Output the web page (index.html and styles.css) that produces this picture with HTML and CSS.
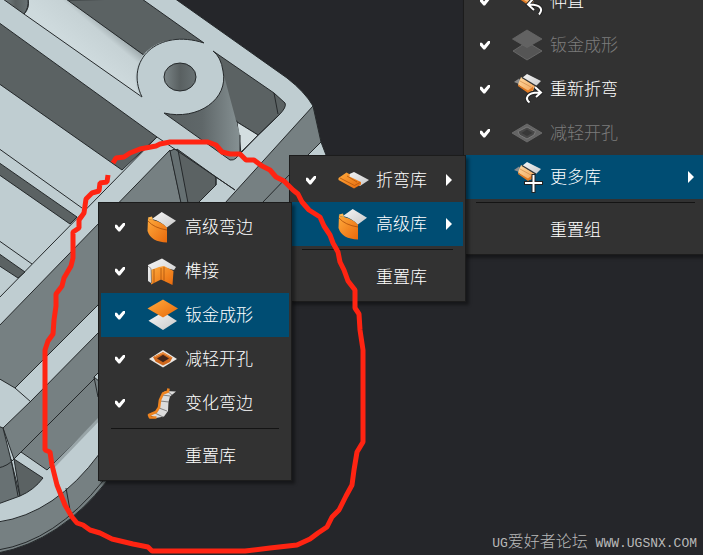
FILE: index.html
```
<!DOCTYPE html>
<html lang="zh-CN">
  <head>
    <meta charset="utf-8">
    <title>UG爱好者论坛</title>
    <link rel="stylesheet" href="styles.css">
  </head>
  <body>
    <svg width="0" height="0" class="defs" aria-hidden="true">
      <defs>
        <linearGradient id="orange" x1="0" y1="0" x2="1" y2="1">
          <stop offset="0" stop-color="#ffab3d"/>
          <stop offset="1" stop-color="#e8690c"/>
        </linearGradient>
        <linearGradient id="peach" x1="0" y1="0" x2="1" y2="1">
          <stop offset="0" stop-color="#ffd9a0"/>
          <stop offset="1" stop-color="#f2a45a"/>
        </linearGradient>
        <linearGradient id="silver" x1="0" y1="0" x2="1" y2="1">
          <stop offset="0" stop-color="#f6f6f6"/>
          <stop offset="1" stop-color="#c9c9c9"/>
        </linearGradient>
      </defs>
      <symbol id="bent-sheet" viewBox="0 0 32 32">
        <path d="M16 1L30 8L25 13L11 5Z" fill="url(#silver)"/>
        <path d="M3 9L8 5.500L10 8L8 11Z" fill="#8c8c8c"/>
        <path d="M10 4L24 13L22 18L17 19L7 11.500Z" fill="url(#peach)"/>
        <path d="M7 11.500L17 17.500L22 13.500L22 17L17 20L7 13Z" fill="#e07a24"/>
        <path d="M11 4.500L25 13" stroke="#333" stroke-width="1.200"/>
        <path d="M9 8L20 14" stroke="#d08b4c" stroke-width=".7"/>
      </symbol>
      <symbol id="advanced" viewBox="0 0 32 32">
        <path d="M15.700 1L30 9.700L20.500 16.700Q15 10 6 8Z" fill="url(#silver)"/>
        <path d="M2 6.500Q3 9 7 9Q16 11 21 16.700V31.500Q5 31 1.500 20Z" fill="url(#orange)"/>
        <path d="M2 6.500L6 5.500L7 9Q3 9 2 6.500Z" fill="#ffb650"/>
        <path d="M2 10Q8 17 21 19" fill="none" stroke="#a94c0a" stroke-width=".8"/>
      </symbol>
      <symbol id="forming" viewBox="0 0 32 32">
        <path d="M2.500 21.700L17 13L31 22L17 31Z" fill="url(#silver)"/>
        <path d="M17 .500L32 9.500L17 18.500L1.500 9.500Z" fill="url(#orange)"/>
      </symbol>
      <symbol id="forming-off" viewBox="0 0 32 32">
        <path d="M2 22L16 13L31 22L16 31Z" fill="#555" stroke="#6e6e6e" stroke-width=".8"/>
        <path d="M16 1L31 10L16 18.500L1.500 10Z" fill="#626262" stroke="#666" stroke-width=".8"/>
      </symbol>
      <symbol id="cutout" viewBox="0 0 32 32">
        <path d="M17 7L31 16L17 24.500L3 16Z" fill="#e9e6e2"/>
        <path d="M17 9L26.500 14.500L24 19L17 22.500L9.500 18.500L7 14Z" fill="#cf671c"/>
        <path d="M17 11.700L23 15.500L17 19.300L11 15.500Z" fill="#40251a"/>
        <path d="M8.500 14L17 10L25.500 14.500" fill="none" stroke="#f39a49"/>
      </symbol>
      <symbol id="cutout-off" viewBox="0 0 32 32">
        <path d="M16 7L31 16L16 25L1 16Z" fill="#646464" stroke="#707070" stroke-width=".8"/>
        <path d="M16 10L24.500 14.500L23 18L16 22L8.500 18L7 14.500Z" fill="#484848" stroke="#7a7a7a"/>
        <path d="M16 12.500L21.500 16L16 19L10.500 16Z" fill="#383838"/>
      </symbol>
      <symbol id="joint" viewBox="0 0 32 32">
        <path d="M16 3.500L30 12L28 15L18 12.500L5.500 15L5 28L2 26V10Z" fill="url(#silver)"/>
        <path d="M5 15V29.500L15 24.500L26.500 30L27.500 16L18 11L13 12Z" fill="url(#orange)"/>
        <path d="M2 11L5 13.500L5.500 28" fill="none" stroke="#777" stroke-width=".8"/>
        <path d="M8 14V28M15 13V24.500M18 12V25.500" stroke="#a8520e" stroke-width=".8"/>
      </symbol>
      <symbol id="variable" viewBox="0 0 32 32">
        <path d="M19 4L30 4.500L24 9.500L22.500 15L22 24L18 29.500L10 31L4 28L12 24L14 12Z" fill="#dcdcdc"/>
        <path d="M16 8L24 9M14 14L23 15M13 21L21 24M9 26L17 30M21 4L26 8" stroke="#777" stroke-width=".9"/>
        <path d="M22.500 1.500L22 4.500L17 6.500L14 13L13 20.500L10 25L3 28L4 30.500L10.500 30.500" fill="none" stroke="#ef8420" stroke-width="2.600" stroke-linejoin="round"/>
      </symbol>
      <symbol id="bend" viewBox="0 0 32 32">
        <path d="M17 8L32 16L23 22L8 12Z" fill="url(#silver)"/>
        <path d="M1.500 14L9.500 8.500L13 10.500L12.500 12.500L24 18V20.500L17 24.500L1.500 16Z" fill="url(#orange)"/>
        <path d="M3 14L17.500 21.500L23 18.500M10 12L20 18" fill="none" stroke="#b2550c" stroke-width=".8"/>
      </symbol>
      <symbol id="arrow-redo" viewBox="0 0 32 32">
        <path d="M18.500 29.500C14 26 15 19 29 19.500M24 14L30 19.500L25 24" fill="none" stroke="#222" stroke-width="4"/>
        <path d="M18.500 29.500C14 26 15 19 29 19.500M24 14L30 19.500L25 24" fill="none" stroke="#fff" stroke-width="2"/>
      </symbol>
      <symbol id="arrow-undo" viewBox="0 0 32 32">
        <path d="M28 29.500C32 25 31 19 17 19.500M22 14L17 19.500L23 25" fill="none" stroke="#222" stroke-width="4"/>
        <path d="M28 29.500C32 25 31 19 17 19.500M22 14L17 19.500L23 25" fill="none" stroke="#fff" stroke-width="2"/>
      </symbol>
      <symbol id="plus" viewBox="0 0 32 32">
        <path d="M22.500 13V32M13 22H32" stroke="#222" stroke-width="4"/>
        <path d="M22.500 14V31M14 22H31" stroke="#fff" stroke-width="2"/>
      </symbol>
    </svg>

    <main class="workspace">
      <svg class="model" width="330" height="555" viewBox="0 0 330 555" aria-hidden="true">
        <defs>
          <linearGradient id="tube" gradientUnits="userSpaceOnUse" x1="85" y1="55" x2="110" y2="25">
            <stop offset="0" stop-color="#cedadd"/>
            <stop offset=".7" stop-color="#c6d2d5"/>
            <stop offset="1" stop-color="#98a3a6"/>
          </linearGradient>
          <linearGradient id="boss" x1="0" y1="0" x2="1" y2="0">
            <stop offset="0" stop-color="#596061"/>
            <stop offset=".5" stop-color="#5f6769"/>
            <stop offset="1" stop-color="#869193"/>
          </linearGradient>
          <linearGradient id="hole" x1="0" y1="0" x2="1" y2="0">
            <stop offset="0" stop-color="#7b8587"/>
            <stop offset=".5" stop-color="#596061"/>
            <stop offset="1" stop-color="#697274"/>
          </linearGradient>
        </defs>
        <g stroke="#25292b" stroke-width="1" stroke-linejoin="round">
          <path class="light" d="M-2 -2H174L287 78Q305 92 313 106L321 142L326 155V202L107 481Q60 541 -2 553Z"/>
          <!-- top ribs and boss -->
          <path class="dark" d="M66 0L142 -1L204 43L180 60L145 56Z"/>
          <path d="M28 -1H66L145 56L142 97L24 14Q30 8 28 -1Z" fill="url(#tube)"/>
          <path d="M3 -1H28Q29 8 24 14Z" fill="url(#hole)"/>
          <path class="dark" d="M213 51L274 93L285 103Q287 107 279 115L258 135L237 122L215 90Z"/>
          <path d="M274 93L278 114" fill="none"/>
          <path d="M237 122L258 135L241 153Z" fill="#d3dee0"/>
          <path d="M164 113Q220 116 223 72L240 135V151Q237 161 230 160Z" fill="url(#boss)" stroke="none"/>
          <path d="M164 113L230 160Q237 161 240 151V135" fill="none"/>
          <path class="light" d="M204 43C158 28 126 58 138 92L142 97L164 113C198 121 229 99 223 71Q221 57 213 51Z" stroke="none"/>
          <path d="M204 43C158 28 124 60 142 97M164 113C198 121 229 99 223 71Q221 57 213 51" fill="none"/>
          <ellipse cx="180" cy="77" rx="16" ry="14" fill="url(#hole)"/>
          <path class="dark" d="M-2 22L157 137L122 170L-2 83Z"/>
          <path d="M-2 148L82 208M-2 240L32 264M157 137L-2 299M279 115L240 153" fill="none"/>
          <path class="dark" d="M-2 162L77 217L70 224L-2 174Z"/>
          <path class="dark" d="M-2 253L25 272L18 278L-2 265Z"/>
          <!-- side walls -->
          <path class="side" d="M-2 327L170 150L181 202L98 305L15 388L-2 378Z"/>
          <path class="dark" d="M177 149L216 177V185L198 203H187Z"/>
          <path d="M170 151Q174 148 178 150L188 203H181Z" fill="#667072"/>
          <path d="M157 137L235 190L216 177V185" fill="none"/>
          <path class="side" d="M313 106L225 203H292V170L308 155L321 142Z"/>
          <path d="M263 202L290 174" fill="none"/>
          <path class="side" d="M100 331L31 401L3 428L14 459L21 452L47 470L100 418Z"/>
          <path d="M21 452L100 373M15 388L31 402M94 377L98 397" fill="none"/>
          <path class="light" d="M94 377L100 371V382Z"/>
          <path d="M-2 426L3 428L20 496L-2 504Z" fill="#687173"/>
          <path class="dark" d="M14 459L43 478Q34 490 20 496Z"/>
          <path d="M11 459L18 496M-2 468Q8 466 14 459" fill="none"/>
          <path d="M53 467L100 418" stroke="#99a5a8" stroke-width="3"/>
          <path class="side" d="M100 453Q55 514 -2 522V553Q60 541 107 481H100Z"/>
          <path d="M66 488L70 510M-2 550Q55 541 103 481" fill="none"/>
        </g>
      </svg>

      <ul class="menu menu-root">
        <li class="row">
          <label><input type="checkbox" checked>
          <svg class="icon"><use href="#bent-sheet"/><use href="#arrow-undo"/></svg><span>伸直</span></label>
        </li>
        <li class="row off">
          <label><input type="checkbox" checked>
          <svg class="icon"><use href="#forming-off"/></svg><span>钣金成形</span></label>
        </li>
        <li class="row">
          <label><input type="checkbox" checked>
          <svg class="icon"><use href="#bent-sheet"/><use href="#arrow-redo"/></svg><span>重新折弯</span></label>
        </li>
        <li class="row off">
          <label><input type="checkbox" checked>
          <svg class="icon"><use href="#cutout-off"/></svg><span>减轻开孔</span></label>
        </li>
        <li class="row open">
          <button type="button" class="more">
          <svg class="icon"><use href="#bent-sheet"/><use href="#plus"/></svg><span>更多库</span></button>

          <ul class="menu menu-library">
            <li class="row">
              <label class="more"><input type="checkbox" checked>
              <svg class="icon"><use href="#bend"/></svg><span>折弯库</span></label>
            </li>
            <li class="row open">
              <button type="button" class="more">
              <svg class="icon"><use href="#advanced"/></svg><span>高级库</span></button>

              <ul class="menu menu-advanced">
                <li class="row">
                  <label><input type="checkbox" checked>
                  <svg class="icon"><use href="#advanced"/></svg><span>高级弯边</span></label>
                </li>
                <li class="row">
                  <label><input type="checkbox" checked>
                  <svg class="icon"><use href="#joint"/></svg><span>榫接</span></label>
                </li>
                <li class="row open">
                  <label><input type="checkbox" checked>
                  <svg class="icon"><use href="#forming"/></svg><span>钣金成形</span></label>
                </li>
                <li class="row">
                  <label><input type="checkbox" checked>
                  <svg class="icon"><use href="#cutout"/></svg><span>减轻开孔</span></label>
                </li>
                <li class="row">
                  <label><input type="checkbox" checked>
                  <svg class="icon"><use href="#variable"/></svg><span>变化弯边</span></label>
                </li>
                <li class="separator"></li>
                <li class="row"><button type="button"><span>重置库</span></button></li>
              </ul>
            </li>
            <li class="separator"></li>
            <li class="row"><button type="button"><span>重置库</span></button></li>
          </ul>
        </li>
        <li class="separator"></li>
        <li class="row"><button type="button"><span>重置组</span></button></li>
      </ul>

      <svg class="marker" width="370" height="555" viewBox="0 0 370 555" aria-hidden="true">
        <path d="M113 163L116 158L124 157L130 153L140 149L156 146L160 144L170 142H208L216 145L222 152L230 154H240L246 160H254L262 166L270 170L276 177L284 181L293 190L298 194L302 202L309 210L320 217L324 226L330 235L333 243L338 252L340 262L344 270L348 281L355 290V308L359 314L360 330L363 350V442L357 452L354 470L352 485L346 496L339 510L332 517L327 527L318 533L310 539L297 545L270 548L245 551H152L148 547L133 544L112 539L100 533L90 530L83 525L77 523L72 517L65 505L61 495L57 485L55 477L52 465L50 452L45 450V350L48 341L53 334L54 320L56 306V294L62 286L64 278L71 266L73 258V232L79 228V220L84 213L86 199L92 193L99 191L100 183L107 182L108 175"/>
      </svg>

      <p class="watermark"><span>UG</span>爱好者论坛<span> WWW.UGSNX.COM</span></p>
    </main>
  </body>
</html>
```
FILE: styles.css
```
body {
  margin: 0;
  background-color: #25262a;
  color: #fff;
  font-family: "Noto Sans CJK SC", sans-serif;
  font-size: 17px;
  font-weight: 300;
  line-height: 24px;
}
.defs {
  position: absolute;
}
.workspace {
  position: relative;
  min-height: 100vh;
  overflow: hidden;
}
/* the drawing area behind the menus */
.model, .marker {
  position: absolute;
  top: 0;
  left: 0;
}
.light {
  fill: #bfcdd1;
}
.dark {
  fill: #5b6263;
}
.side {
  fill: #768082;
}
.marker {
  pointer-events: none;
}
.marker path {
  fill: none;
  stroke: #ff2412;
  stroke-width: 5px;
  stroke-linejoin: bevel;
}
/* menus */
.menu {
  position: absolute;
  box-sizing: border-box;
  margin: 0;
  padding: 2px;
  list-style: none;
  background-color: #323232;
  border: 1px solid #1c1c1c;
  box-shadow: 3px 3px 3px rgba(0, 0, 0, 0.4);
}
.menu-root {
  top: -24px;
  right: -5px;
  width: 245px;
}
.menu-library {
  top: 0;
  right: 100%;
  width: 177px;
}
.menu-advanced {
  top: 0;
  right: 100%;
  width: 194px;
}
.row {
  position: relative;
}
.row label, .row button {
  box-sizing: border-box;
  display: grid;
  grid-template-columns: 32px 32px 1fr;
  column-gap: 6px;
  align-items: center;
  width: 100%;
  height: 44px;
  margin: 0;
  padding: 0 11px 0 7px;
  border: 0;
  background: none;
  color: inherit;
  font: inherit;
  text-align: left;
  white-space: nowrap;
}
.row.open > label, .row.open > button {
  background-color: #004d73;
}
.row.off {
  color: #7c7c7c;
}
.row input {
  appearance: none;
  width: 10px;
  height: 9px;
  margin: 0 0 0 7px;
}
.row input:checked {
  background-color: #fff;
  clip-path: polygon(0 25%, 20% 25%, 40% 55%, 85% 0, 100% 0, 100% 30%, 50% 100%, 35% 100%, 0 55%);
}
.icon {
  grid-column: 2;
  width: 32px;
  height: 32px;
}
.row span {
  grid-column: 3;
  padding: 0 0 2px 1px;
}
.more::after {
  content: "";
  grid-column: 4;
  width: 6px;
  height: 12px;
  background-color: #fff;
  clip-path: polygon(0 0, 100% 50%, 0 100%);
}
.separator {
  height: 1px;
  margin: 3px 10px 5px;
  background-color: #141414;
}
.watermark {
  position: absolute;
  right: 6px;
  bottom: 1px;
  margin: 0;
  color: #b9b9b9;
  font-size: 16px;
  line-height: 20px;
  white-space: pre;
}
.watermark span {
  font-family: "Liberation Mono", monospace;
  font-size: 13px;
}
```
